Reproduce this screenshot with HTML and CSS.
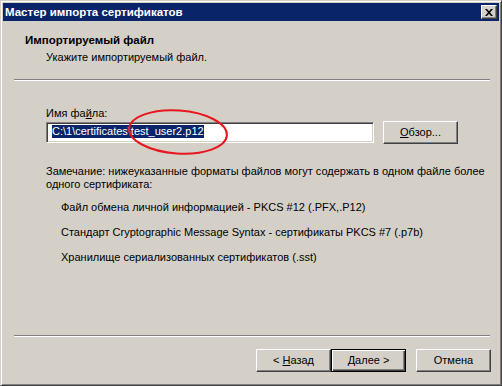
FILE: index.html
```html
<!DOCTYPE html>
<html lang="ru">
<head>
  <meta charset="UTF-8">
  <title>Мастер импорта сертификатов</title>
  <link rel="stylesheet" href="styles.css">
</head>
<body>
  <div class="window">
    <div class="titlebar">
      <span>Мастер импорта сертификатов</span>
      <div class="close">
        <svg width="8" height="7" viewBox="0 0 8 7"><path d="M0 0h2l2 2.2 2-2.2h2L5 3.5 8 7H6L4 4.8 2 7H0l3-3.5z" fill="#000"/></svg>
      </div>
    </div>
    <div class="header">
      <h1>Импортируемый файл</h1>
      <p>Укажите импортируемый файл.</p>
    </div>
    <div class="sep"></div>
    <div class="body">
      <div class="label">Имя фа<u>й</u>ла:</div>
      <div class="file-row">
        <div class="field"><span class="sel">C:\1\certificates\test_user2.p12</span></div>
        <div class="btn browse"><span><u>О</u>бзор...</span></div>
        <svg class="mark" width="110" height="52" viewBox="0 0 110 52">
          <ellipse cx="55" cy="26" rx="49" ry="21.5" transform="rotate(4 55 26)" fill="none" stroke="#e8161e" stroke-width="2"/>
        </svg>
      </div>
      <p class="note">Замечание: нижеуказанные форматы файлов могут содержать в одном файле более<br>одного сертификата:</p>
      <ul class="formats">
        <li>Файл обмена личной информацией - PKCS #12 (.PFX,.P12)</li>
        <li>Стандарт Cryptographic Message Syntax - сертификаты PKCS #7 (.p7b)</li>
        <li>Хранилище сериализованных сертификатов (.sst)</li>
      </ul>
    </div>
    <div class="sep"></div>
    <div class="buttons">
      <div class="btn"><span>&lt; <u>Н</u>азад</span></div>
      <div class="btn default"><span><u>Д</u>алее &gt;</span></div>
      <div class="btn cancel"><span>Отмена</span></div>
    </div>
  </div>
</body>
</html>
```

FILE: styles.css
```css
* { margin: 0; padding: 0; box-sizing: border-box; }
body {
  background: #fff;
  font-family: "Liberation Sans", Arial, sans-serif;
  font-size: 11px;
  line-height: 13px;
  color: #000;
}
.window {
  width: 502px;
  height: 386px;
  background: #d4d0c8;
  border: 1px solid;
  border-color: #d4d0c8 #404040 #404040 #d4d0c8;
  box-shadow: inset 1px 1px #fff, inset -1px -1px #808080;
  padding: 2px;
  display: flex;
  flex-direction: column;
}
.titlebar {
  height: 18px;
  background: #0a246a;
  color: #fff;
  font-weight: bold;
  font-size: 11.5px;
  display: flex;
  align-items: center;
  justify-content: space-between;
  padding: 0 2px 0 2px;
}
.close {
  width: 16px;
  height: 14px;
  background: #d4d0c8;
  border: 1px solid;
  border-color: #fff #404040 #404040 #fff;
  box-shadow: inset -1px -1px #808080;
  display: flex;
  align-items: center;
  justify-content: center;
  padding-right: 1px;
}
.header {
  height: 58px;
  padding: 13px 0 0 22px;
}
.header h1 {
  font-size: 11.5px;
  font-weight: bold;
}
.header p {
  margin: 4px 0 0 21px;
}
.sep {
  height: 2px;
  width: 476px;
  margin-left: 11px;
  border-top: 1px solid #808080;
  border-bottom: 1px solid #fff;
}
.body {
  flex: 1;
  padding: 26px 0 0 43px;
  white-space: nowrap;
}
.label {
  margin-bottom: 1px;
}
.file-row {
  position: relative;
  display: flex;
  align-items: center;
  height: 23px;
}
.field {
  width: 328px;
  height: 21px;
  background: #fff;
  border: 1px solid;
  border-color: #808080 #fff #fff #808080;
  box-shadow: inset 1px 1px #404040, inset -1px -1px #d4d0c8;
  padding: 2px 0 0 5px;
}
.sel {
  background: #0a246a;
  color: #fff;
  display: inline-block;
  height: 13px;
}
.btn {
  width: 75px;
  height: 23px;
  background: #d4d0c8;
  border: 1px solid;
  border-color: #fff #404040 #404040 #fff;
  box-shadow: inset -1px -1px #808080;
  display: flex;
  align-items: center;
  justify-content: center;
  white-space: pre;
}
.browse {
  margin-left: 9px;
}
.mark {
  position: absolute;
  left: 77px;
  top: -15px;
}
.note {
  margin-top: 21px;
}
.formats {
  list-style: none;
  margin: 10px 0 0 15px;
}
.formats li + li {
  margin-top: 12px;
}
.buttons {
  height: 46px;
  display: flex;
  justify-content: flex-end;
  align-items: flex-start;
  padding: 12px 8px 0 0;
}
.btn.default {
  border: 1px solid #000;
  box-shadow: inset 1px 1px #fff, inset -1px -1px #404040, inset -2px -2px #808080;
}
.btn.cancel {
  margin-left: 10px;
}
```
